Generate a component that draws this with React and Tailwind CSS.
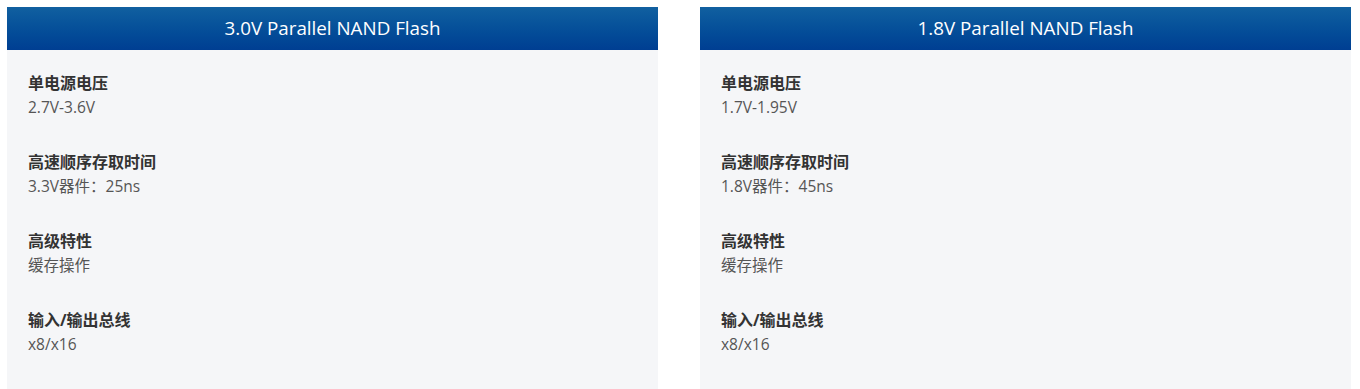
export default function App() {
  const cards = [
    {
      title: "3.0V Parallel NAND Flash",
      items: [
        ["单电源电压", "2.7V-3.6V"],
        ["高速顺序存取时间", "3.3V器件：25ns"],
        ["高级特性", "缓存操作"],
        ["输入/输出总线", "x8/x16"],
      ],
    },
    {
      title: "1.8V Parallel NAND Flash",
      items: [
        ["单电源电压", "1.7V-1.95V"],
        ["高速顺序存取时间", "1.8V器件：45ns"],
        ["高级特性", "缓存操作"],
        ["输入/输出总线", "x8/x16"],
      ],
    },
  ];
  return (
    <div
      className="w-[1360px] h-[389px] overflow-hidden bg-white flex gap-[42px] pl-[7px] pt-[7px]"
      style={{ fontFamily: '"Open Sans", "Noto Sans CJK SC", sans-serif' }}
    >
      {cards.map((c) => (
        <div key={c.title} className="w-[651px] flex flex-col bg-[#f5f6f8] h-[400px]">
          <div className="h-[43px] flex items-center justify-center bg-gradient-to-b from-[#1160a0] to-[#003e92] text-white text-[18.8px]">
            {c.title}
          </div>
          <div className="pt-[21px] px-[21px] flex flex-col gap-[31px]">
            {c.items.map(([k, v]) => (
              <div key={k} className="flex flex-col">
                <div className="text-[16px] leading-[24px] font-bold text-[#333]">{k}</div>
                <div className="text-[15.5px] leading-[24px] text-[#555]">{v}</div>
              </div>
            ))}
          </div>
        </div>
      ))}
    </div>
  );
}
